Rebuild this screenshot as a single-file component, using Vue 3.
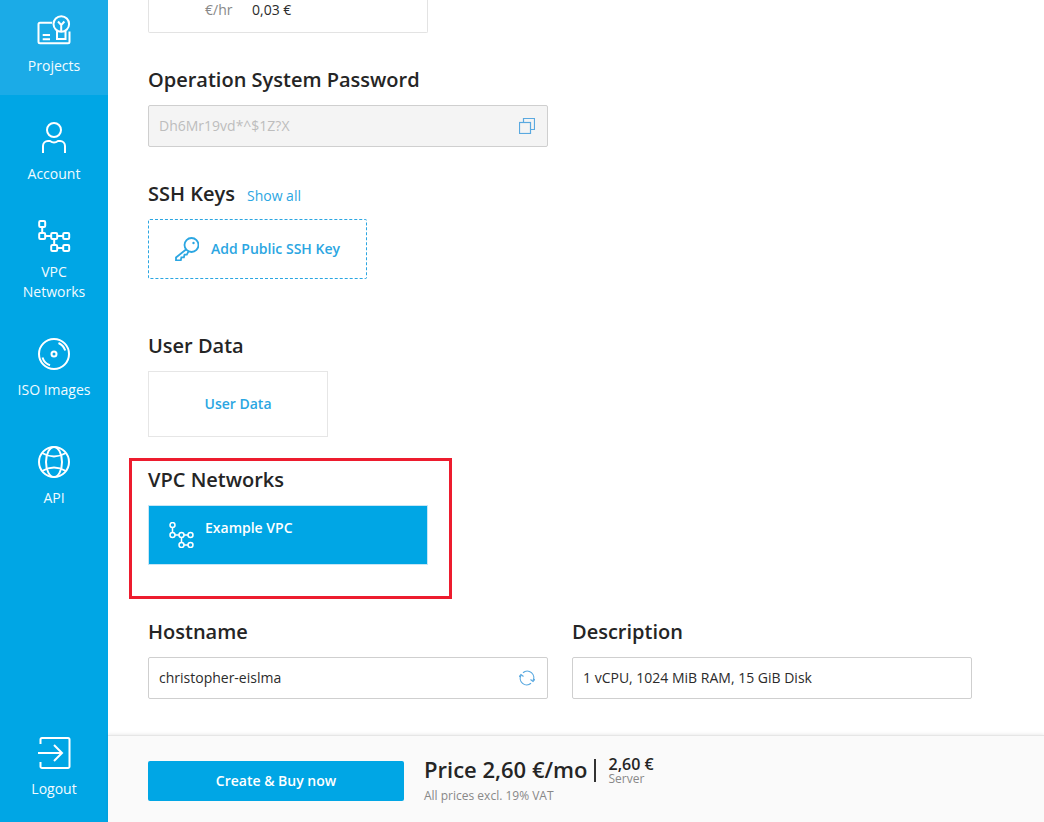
<script setup>
</script>

<template>
  <div class="app">
    <aside class="sidebar">
      <a class="nav active">
        <svg class="nav-icon" viewBox="0 0 32 32">
          <path d="M14 8.700H2a1.500 1.500 0 0 0-1.500 1.500v17.600a1.500 1.500 0 0 0 1.500 1.500h28a1.500 1.500 0 0 0 1.500-1.500V17.500" />
          <circle cx="23.300" cy="10" r="7.800" />
          <path d="M19 17v8h8.500v-8M20 7.500l3.200 3.500 3.200-3.500M23.200 11v6M4.700 21H12M4.700 25.300H12" />
        </svg>
        <span>Projects</span>
      </a>
      <div class="nav-list">
        <a class="nav">
          <svg class="nav-icon" viewBox="0 0 32 32">
            <circle cx="16" cy="8" r="7" />
            <path d="M5 31v-7a5 5 0 0 1 5-5h2q4 3 8 0h2a5 5 0 0 1 5 5v7" />
          </svg>
          <span>Account</span>
        </a>
        <a class="nav">
          <svg class="nav-icon" viewBox="0 0 32 32">
            <rect x="1.200" y="1" width="6" height="6" rx="1.200" />
            <rect x="1.200" y="13" width="6" height="6" rx="1.200" />
            <rect x="13.200" y="13" width="6" height="6" rx="1.200" />
            <rect x="25.200" y="13" width="6" height="6" rx="1.200" />
            <rect x="13.200" y="25" width="6" height="6" rx="1.200" />
            <rect x="25.200" y="25" width="6" height="6" rx="1.200" />
            <path d="M4.200 7v6M7.200 16h6M19.200 16h6M16.200 19v6M19.200 28h6" />
          </svg>
          <span>VPC<br />Networks</span>
        </a>
        <a class="nav nav-iso">
          <svg class="nav-icon" viewBox="0 0 32 32">
            <circle cx="16" cy="16" r="15" />
            <circle cx="16" cy="16" r="2.500" />
            <path d="M20.500 5a12 12 0 0 1 6.700 7.500M4.500 19.500A12 12 0 0 0 12 27.300" />
          </svg>
          <span>ISO Images</span>
        </a>
        <a class="nav">
          <svg class="nav-icon" viewBox="0 0 32 32">
            <circle cx="16" cy="16" r="15" />
            <ellipse cx="16" cy="16" rx="8" ry="15" />
            <path d="M4 7q12 7 24 0M4 25q12-7 24 0" />
          </svg>
          <span>API</span>
        </a>
      </div>
      <a class="nav nav-logout">
        <svg class="nav-icon" viewBox="0 0 32 32">
          <path d="M2.500 7V2.500a1.500 1.500 0 0 1 1.500-1.500h26a1.500 1.500 0 0 1 1.500 1.500v27a1.500 1.500 0 0 1-1.500 1.500H4a1.500 1.500 0 0 1-1.500-1.500V25" />
          <path d="M0 16h23.500M16 8l8 8-8 8" />
        </svg>
        <span>Logout</span>
      </a>
    </aside>

    <div class="main">
      <div class="content">
        <div class="price-card">
          <span class="price-unit">€/hr</span>
          <span class="price-value">0,03 €</span>
        </div>

        <section class="section section-password">
          <h2>Operation System Password</h2>
          <div class="field field-disabled">
            <span>Dh6Mr19vd*^$1Z?X</span>
            <svg class="field-icon" viewBox="0 0 16 16">
              <path d="M4.500 4.500V.5h11v11h-4" />
              <rect x="0.500" y="4.500" width="11" height="11" />
            </svg>
          </div>
        </section>

        <section class="section section-ssh">
          <div class="heading-row">
            <h2>SSH Keys</h2>
            <a class="show-all">Show all</a>
          </div>
          <div class="add-key">
            <svg class="key-icon" viewBox="0 0 24 24">
              <circle cx="16.500" cy="8" r="7" />
              <circle class="key-dot" cx="18.500" cy="6" r="1.200" />
              <path d="M11 12.500 1 20.500v2.800h4.800l.6-3h2.500l.6-2.600h2.300l1.600-3" />
            </svg>
            <span>Add Public SSH Key</span>
          </div>
        </section>

        <section class="section section-user">
          <h2>User Data</h2>
          <div class="user-data">User Data</div>
        </section>

        <section class="section section-vpc">
          <h2>VPC Networks</h2>
          <div class="vpc-card">
            <svg class="vpc-icon" viewBox="0 0 25 26">
              <circle cx="3.500" cy="3" r="2.500" />
              <circle cx="3.500" cy="13" r="2.500" />
              <circle cx="12.500" cy="13" r="2.500" />
              <circle cx="21.500" cy="13" r="2.500" />
              <circle cx="12.500" cy="23" r="2.500" />
              <circle cx="21.500" cy="23" r="2.500" />
              <path d="M3.500 5.500v5M6 13h4M15 13h4M12.500 15.500v5M15 23h4" />
            </svg>
            <span>Example VPC</span>
          </div>
          <div class="annotation"></div>
        </section>

        <section class="section-pair">
          <div class="pair-col">
            <h2>Hostname</h2>
            <div class="field">
              <span>christopher-eislma</span>
              <svg class="field-icon" viewBox="0 0 16 16">
                <path d="M4 2.700A6.500 6.500 0 0 1 13.800 11" />
                <path d="M12 13.300A6.500 6.500 0 0 1 2.200 5" />
                <path d="M11.500 9.500l2.500 2 2-2.500M4.500 6.500 2 4.500 0 7" />
              </svg>
            </div>
          </div>
          <div class="pair-col">
            <h2>Description</h2>
            <div class="field">
              <span>1 vCPU, 1024 MiB RAM, 15 GiB Disk</span>
            </div>
          </div>
        </section>
      </div>

      <footer class="footer">
        <button class="buy" type="button">Create &amp; Buy now</button>
        <div class="total">
          <div class="total-main">Price 2,60 €/mo</div>
          <div class="total-note">All prices excl. 19% VAT</div>
        </div>
        <div class="divider"></div>
        <div class="breakdown">
          <div class="breakdown-value">2,60 €</div>
          <div class="breakdown-label">Server</div>
        </div>
      </footer>
    </div>
  </div>
</template>

<style>
html,
body {
  margin: 0;
  overflow: hidden;
  background: #fff;
}
</style>

<style scoped>
.app {
  display: flex;
  width: 1044px;
  height: 822px;
  overflow: hidden;
  font-family: "Open Sans", "Liberation Sans", sans-serif;
  font-size: 14px;
  color: #2b2b2b;
}

.sidebar {
  flex: none;
  display: flex;
  flex-direction: column;
  width: 108px;
  background: #00a6e5;
  color: #fff;
}

.nav {
  display: flex;
  flex-direction: column;
  align-items: center;
  padding: 18px 0;
  line-height: 20px;
  text-align: center;
  color: #f2fbff;
}

.nav span {
  margin-top: 10px;
}

.nav.active {
  height: 95px;
  box-sizing: border-box;
  padding: 14px 0 0;
  background: #1babe7;
}

.nav-list {
  display: flex;
  flex-direction: column;
  padding-top: 9px;
}

.nav-iso {
  padding-bottom: 28px;
}

.nav-logout {
  margin-top: auto;
  padding: 0 0 23px;
}

.nav-icon {
  display: block;
  width: 32px;
  height: 32px;
  overflow: visible;
  fill: none;
  stroke: #fff;
  stroke-width: 2;
}

.main {
  flex: 1;
  display: flex;
  flex-direction: column;
  min-width: 0;
}

.content {
  flex: 1;
  min-height: 0;
  padding-left: 40px;
}

h2 {
  margin: 0 0 11px;
  font-size: 20px;
  font-weight: 600;
  line-height: 28px;
  color: #252525;
}

.price-card {
  display: flex;
  box-sizing: border-box;
  width: 280px;
  height: 33px;
  padding: 0 0 0 56px;
  border: 1px solid #e3e3e3;
  border-top: 0;
  border-radius: 0 0 2px 2px;
  line-height: 20px;
}

.price-unit {
  width: 47px;
  color: #888;
}

.section-password {
  margin-top: 33px;
}

.section-ssh {
  margin-top: 33px;
}

.section-user {
  margin-top: 53px;
}

.section-vpc {
  position: relative;
  margin-top: 29px;
}

.section-pair {
  display: flex;
  gap: 24px;
  margin-top: 53px;
}

.pair-col {
  width: 400px;
}

.field {
  display: flex;
  align-items: center;
  justify-content: space-between;
  box-sizing: border-box;
  width: 400px;
  height: 42px;
  padding: 0 12px 0 10px;
  border: 1px solid #cfcfcf;
  border-radius: 2px;
  background: #fff;
}

.field span {
  padding-bottom: 2px;
}

.field-disabled {
  background: #f4f4f4;
  color: #bdbdbd;
}

.field-icon {
  width: 16px;
  height: 16px;
  fill: none;
  stroke: #5aa9e0;
  stroke-width: 1.200;
}

.heading-row {
  display: flex;
  align-items: baseline;
  gap: 12px;
}

.show-all {
  color: #2ba6e2;
}

.add-key {
  display: flex;
  align-items: center;
  box-sizing: border-box;
  width: 219px;
  height: 60px;
  padding-left: 26px;
  border: 1px dashed #2ba6e2;
  border-radius: 2px;
  font-weight: 600;
  color: #2ba6e2;
}

.add-key span {
  padding-bottom: 2px;
}

.key-icon {
  width: 24px;
  height: 24px;
  margin-right: 12px;
  fill: none;
  stroke: #2ba6e2;
  stroke-width: 1.800;
}

.key-dot {
  fill: #2ba6e2;
  stroke: none;
}

.user-data {
  display: flex;
  align-items: center;
  justify-content: center;
  box-sizing: border-box;
  width: 180px;
  height: 66px;
  padding-bottom: 2px;
  border: 1px solid #e6e6e6;
  font-weight: 600;
  color: #2ba6e2;
}

.vpc-card {
  display: flex;
  box-sizing: border-box;
  width: 280px;
  height: 60px;
  padding: 12px 0 0 20px;
  border: 1px solid #c6e6f6;
  background: #00a6e5;
  font-weight: 600;
  line-height: 20px;
  color: #fff;
}

.vpc-icon {
  width: 25px;
  height: 26px;
  margin: 4px 11px 0 0;
  fill: none;
  stroke: #fff;
  stroke-width: 1.500;
}

.annotation {
  position: absolute;
  top: -8px;
  left: -19px;
  box-sizing: border-box;
  width: 323px;
  height: 141px;
  border: 3px solid #ed1c2e;
  pointer-events: none;
}

.footer {
  flex: none;
  display: flex;
  align-items: flex-start;
  box-sizing: border-box;
  height: 87px;
  padding: 25px 0 0 40px;
  border-top: 1px solid #e6e6e6;
  background: #fafafa;
  box-shadow: 0 -1px 3px rgba(0, 0, 0, 0.08);
}

.buy {
  width: 256px;
  height: 40px;
  margin-right: 20px;
  padding: 0 0 2px;
  border: 0;
  border-radius: 2px;
  background: #00a6e5;
  font: 600 14px "Open Sans", "Liberation Sans", sans-serif;
  color: #fff;
}

.total-main {
  margin-top: -8px;
  font-size: 22px;
  font-weight: 600;
  line-height: 32px;
  color: #252525;
}

.total-note {
  margin-top: 3px;
  font-size: 12px;
  line-height: 16px;
  color: #888;
}

.divider {
  width: 2px;
  height: 23px;
  margin: -2px 13px 0 6px;
  background: #333;
}

.breakdown-value {
  margin-top: -5px;
  font-size: 16px;
  font-weight: 600;
  line-height: 16px;
  color: #252525;
}

.breakdown-label {
  font-size: 12px;
  line-height: 14px;
  color: #888;
}
</style>
